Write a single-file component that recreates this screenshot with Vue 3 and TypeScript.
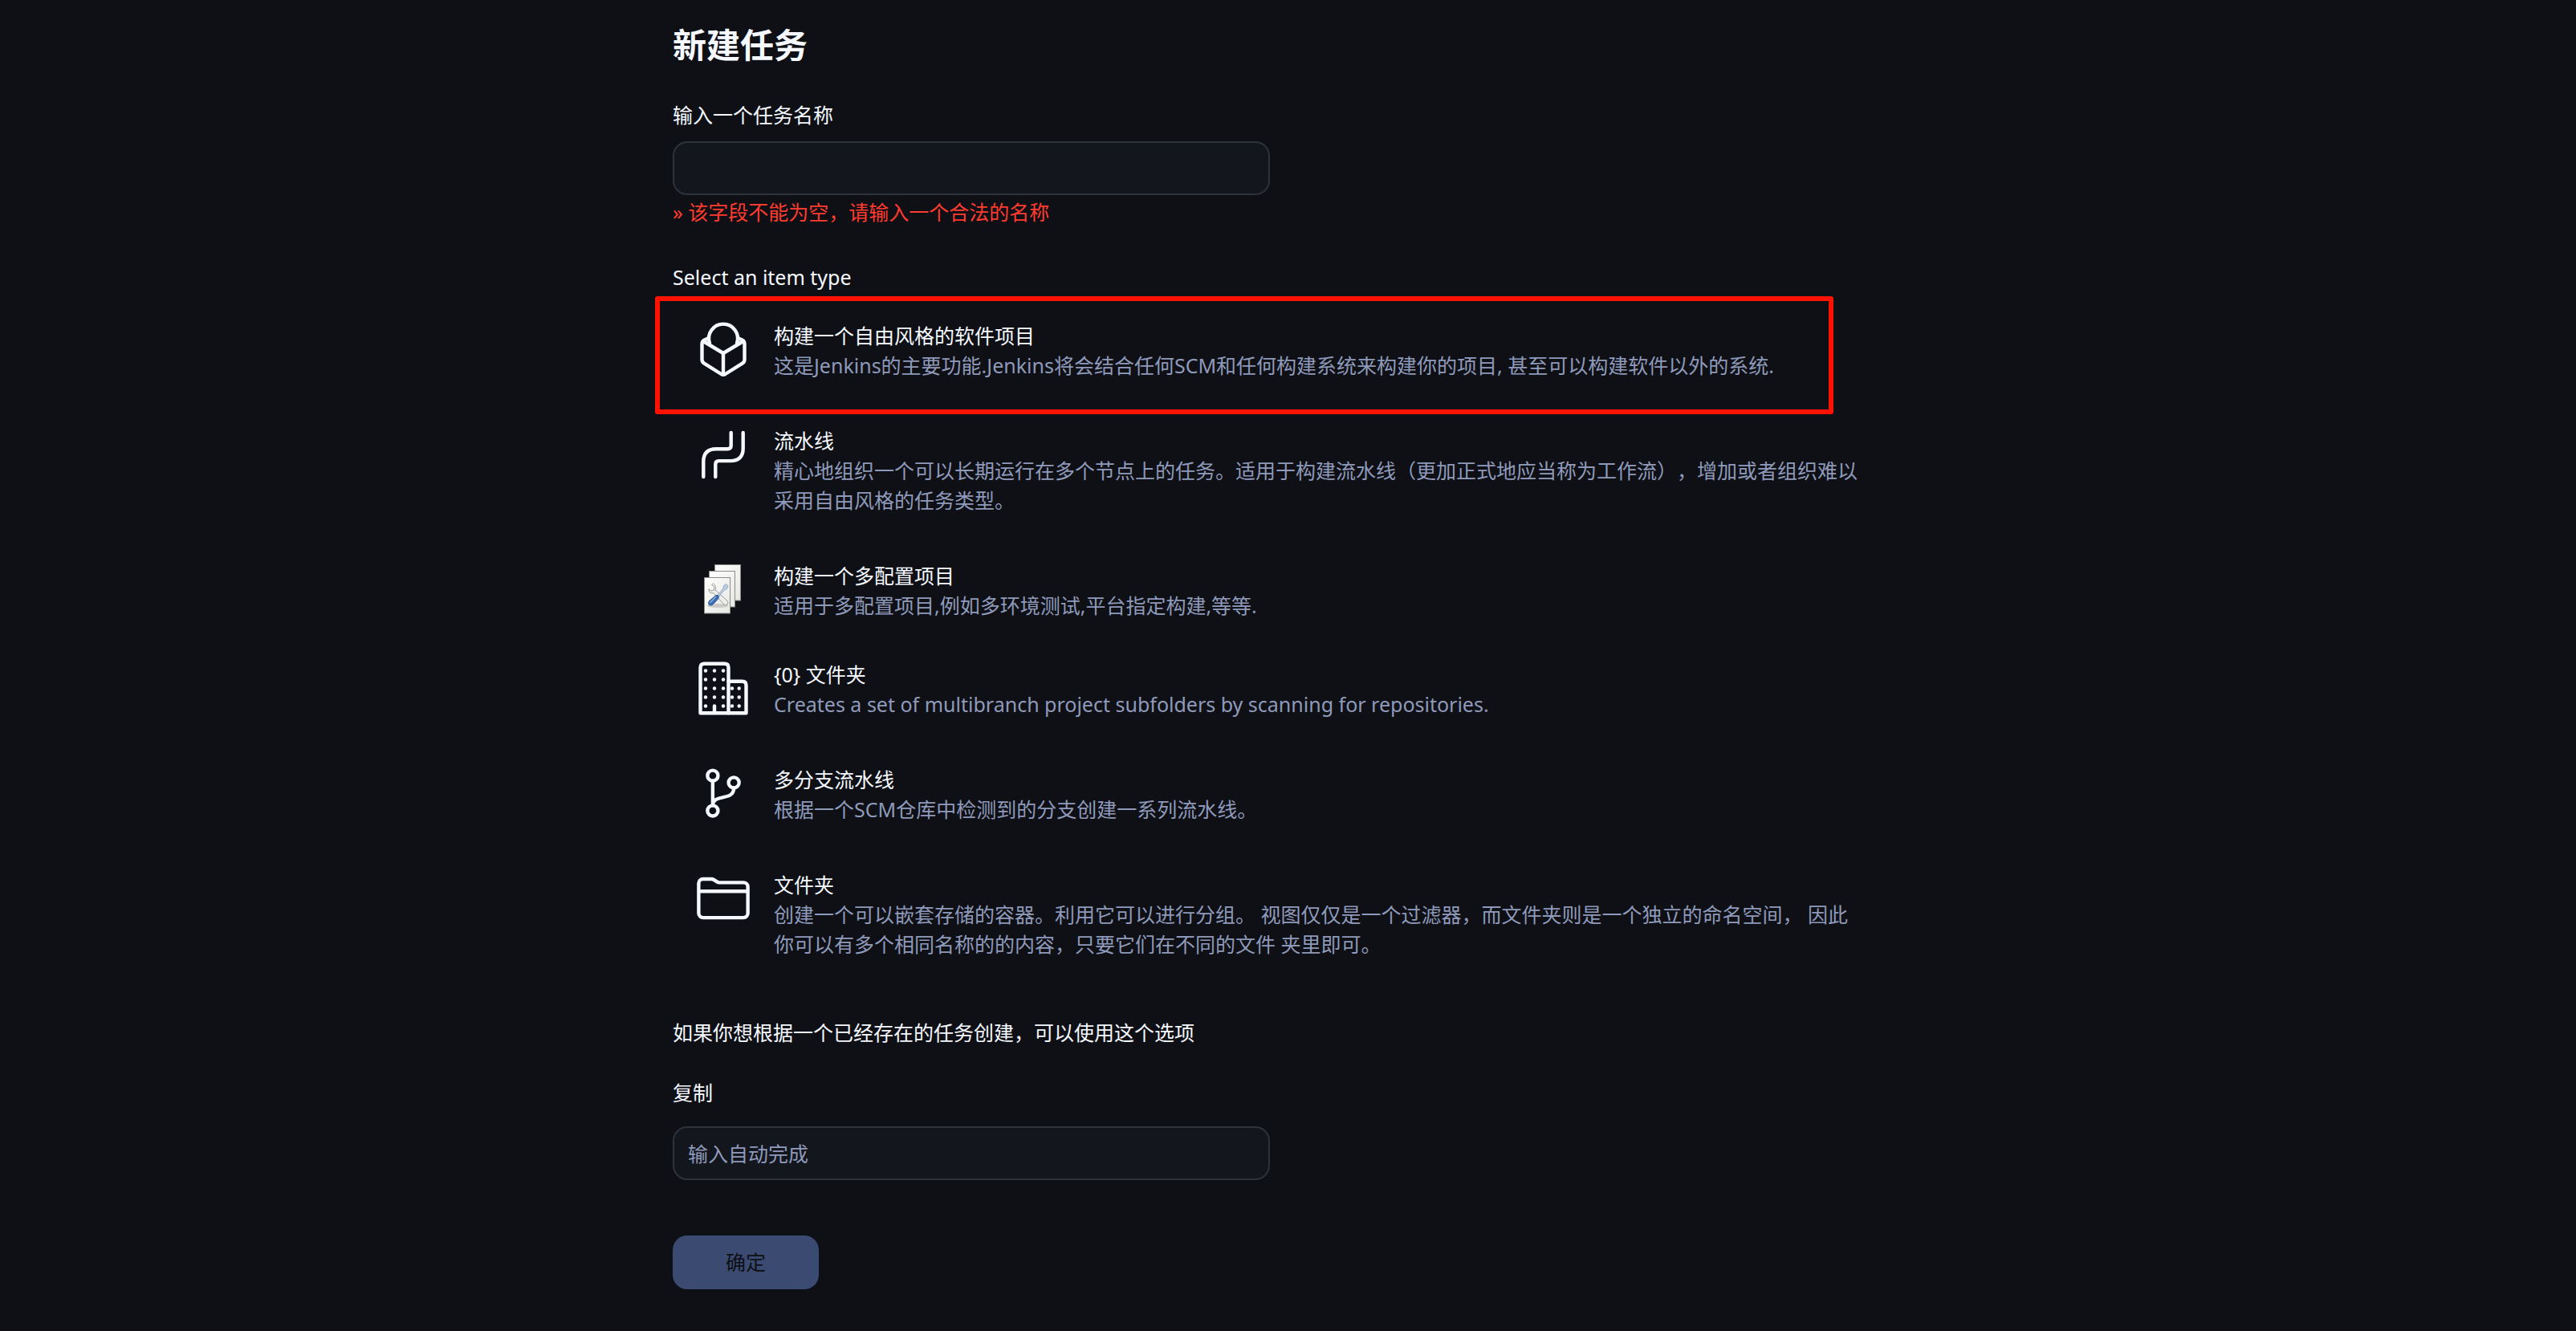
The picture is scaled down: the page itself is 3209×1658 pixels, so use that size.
<script setup lang="ts">
import { ref } from 'vue'

type IconName = 'freestyle' | 'pipeline' | 'matrix' | 'organization' | 'branch' | 'folder'

interface ItemType {
  id: IconName
  title: string
  description: string
}

const itemTypes: ItemType[] = [
  {
    id: 'freestyle',
    title: '构建一个自由风格的软件项目',
    description:
      '这是Jenkins的主要功能.Jenkins将会结合任何SCM和任何构建系统来构建你的项目, 甚至可以构建软件以外的系统.',
  },
  {
    id: 'pipeline',
    title: '流水线',
    description:
      '精心地组织一个可以长期运行在多个节点上的任务。适用于构建流水线（更加正式地应当称为工作流），增加或者组织难以采用自由风格的任务类型。',
  },
  {
    id: 'matrix',
    title: '构建一个多配置项目',
    description: '适用于多配置项目,例如多环境测试,平台指定构建,等等.',
  },
  {
    id: 'organization',
    title: '{0} 文件夹',
    description: 'Creates a set of multibranch project subfolders by scanning for repositories.',
  },
  {
    id: 'branch',
    title: '多分支流水线',
    description: '根据一个SCM仓库中检测到的分支创建一系列流水线。',
  },
  {
    id: 'folder',
    title: '文件夹',
    description:
      '创建一个可以嵌套存储的容器。利用它可以进行分组。 视图仅仅是一个过滤器，而文件夹则是一个独立的命名空间， 因此你可以有多个相同名称的的内容，只要它们在不同的文件 夹里即可。',
  },
]

const name = ref('')
const copyFrom = ref('')
const selected = ref<IconName | ''>('')
</script>

<template>
  <main class="page">
    <form class="form" @submit.prevent>
      <h1 class="heading">新建任务</h1>

      <label class="label" for="name">输入一个任务名称</label>
      <input id="name" v-model="name" class="field name-field" type="text" autocomplete="off" />
      <p class="error">» 该字段不能为空，请输入一个合法的名称</p>

      <fieldset class="types">
        <legend class="label">Select an item type</legend>
        <label
          v-for="item in itemTypes"
          :key="item.id"
          class="item"
          :class="{ marked: item.id === 'freestyle', compact: item.id === 'matrix' }"
        >
          <input v-model="selected" class="radio" type="radio" name="mode" :value="item.id" />

          <svg v-if="item.id === 'freestyle'" class="icon" viewBox="0 0 70 70" aria-hidden="true">
            <g class="line">
              <path d="M18 27.5A18 18 0 1 1 52 27.5" />
              <path d="M16 21.5L11.5 23.6Q8.500 25 8.500 28.500V48Q8.500 51 11.200 52.600L32.500 66Q35 67.400 37.500 66L58.800 52.600Q61.500 51 61.500 48V28.500Q61.500 25 58.500 23.600L54 21.500" />
              <path d="M10 25L35 40L60 25M35 40V66" />
            </g>
          </svg>

          <svg v-else-if="item.id === 'pipeline'" class="icon" viewBox="0 0 70 70" aria-hidden="true">
            <g class="line">
              <path d="M44.700 8V24Q44.700 28.200 40.500 28.200H26Q10.300 28.200 10.300 44V63" />
              <path d="M59.700 8V27.500Q59.700 43.100 44 43.100H29.500Q25.300 43.100 25.300 47.300V63" />
            </g>
          </svg>

          <svg v-else-if="item.id === 'matrix'" class="icon" viewBox="0 0 70 70" aria-hidden="true">
            <defs>
              <linearGradient id="paper" x1="0" y1="0" x2="1" y2="1">
                <stop offset="0" stop-color="#ffffff" />
                <stop offset="1" stop-color="#e6e6e3" />
              </linearGradient>
            </defs>
            <g fill="url(#paper)" stroke="#8b8c88">
              <rect x="24.500" y="4.500" width="32" height="44.500" />
              <rect x="17.500" y="12.500" width="32" height="44.500" />
              <rect x="11.500" y="20.500" width="32" height="44.500" />
            </g>
            <ellipse cx="28" cy="55.500" rx="13" ry="2.500" fill="#c9c9c5" />
            <path
              d="M22.500 28C25.500 29.500 26.500 33 25 36L40 49.500Q42 52 40 54Q37.500 55.500 35.500 53.500L22.500 39.500C19 41 16.500 38 17 34.500L20 37L23.500 36L23.800 32L20.600 29.500Z"
              fill="#eeeeec"
              stroke="#9a9c98"
            />
            <path d="M27.500 43L34.500 34.500L35.500 30.500L38.500 28.500L41 30.500L40 34L36 36.500L29.500 44.500Z" fill="#b9cbe0" stroke="#91a5be" stroke-width="0.8" />
            <path d="M26 42.500Q28.500 41.500 29.500 44.500Q29 47.500 22.500 53.500Q20.500 56 17.500 54.500Q15.500 52.500 17.500 49.500Z" fill="#3c6fb5" stroke="#204a87" stroke-width="0.8" />
            <path d="M18.800 51.500L25.500 44.500" stroke="#8fb4e3" stroke-width="1.300" stroke-linecap="round" />
          </svg>

          <svg v-else-if="item.id === 'organization'" class="icon" viewBox="0 0 70 70" aria-hidden="true">
            <g class="line">
              <path d="M6.500 66.300V9.500Q6.500 4.700 11.300 4.700H36.700Q41.500 4.700 41.500 9.500V66.300Z" />
              <path d="M41.500 26.700H58.700Q63.500 26.700 63.500 31.500V66.300H41.500" />
              <path d="M24 57.500V66" />
            </g>
            <g class="dot">
              <template v-for="row in 5" :key="row">
                <circle cx="13" :cy="2.5 + row * 11" r="2.200" />
                <circle v-if="row < 5" cx="24" :cy="2.5 + row * 11" r="2.200" />
                <circle cx="35" :cy="2.5 + row * 11" r="2.200" />
                <circle v-if="row > 2" cx="46" :cy="2.5 + row * 11" r="2.200" />
                <circle v-if="row > 2" cx="54.700" :cy="2.5 + row * 11" r="2.200" />
              </template>
            </g>
          </svg>

          <svg v-else-if="item.id === 'branch'" class="icon" viewBox="0 0 512 512" aria-hidden="true">
            <g class="line wide">
              <circle cx="160" cy="96" r="48" />
              <circle cx="160" cy="416" r="48" />
              <circle cx="352" cy="160" r="48" />
              <path d="M160 368V144M352 208c0 128-192 48-192 160" />
            </g>
          </svg>

          <svg v-else class="icon" viewBox="0 0 512 512" aria-hidden="true">
            <path
              class="line wide"
              d="M440 432H72a40 40 0 01-40-40V120a40 40 0 0140-40h75.890a40 40 0 0122.190 6.720l27.840 18.560a40 40 0 0022.190 6.720H440a40 40 0 0140 40v240a40 40 0 01-40 40zM32 192h448"
            />
          </svg>

          <span class="text">
            <span class="title">{{ item.title }}</span>
            <span class="description">{{ item.description }}</span>
          </span>
        </label>
      </fieldset>

      <p class="hint">如果你想根据一个已经存在的任务创建，可以使用这个选项</p>
      <label class="label" for="from">复制</label>
      <input id="from" v-model="copyFrom" class="field copy-field" type="text" placeholder="输入自动完成" autocomplete="off" />

      <button class="submit" type="submit" disabled>确定</button>
    </form>
  </main>
</template>

<style>
body {
  background: #0e1015;
}
</style>

<style scoped>
.page {
  box-sizing: border-box;
  min-height: 100vh;
  padding: 24px;
  color: #f5f9ff;
  font-family: "Noto Sans", "Noto Sans CJK SC", sans-serif;
  font-size: 25px;
  line-height: 37px;
  text-spacing-trim: space-all;
}

.form {
  display: flex;
  flex-direction: column;
  align-items: flex-start;
  max-width: 1533px;
  margin: 0 auto;
}

.heading {
  margin: 0 0 37px;
  font-size: 42px;
  font-weight: 700;
  line-height: 64px;
}

.label {
  display: block;
  padding: 0;
}

.field {
  box-sizing: border-box;
  width: 100%;
  max-width: 744px;
  height: 67px;
  padding: 0 17px;
  border: 2px solid #2d323b;
  border-radius: 18px;
  outline: none;
  background: #13161d;
  color: inherit;
  font: inherit;
}

.field::placeholder {
  color: #8f9abb;
  opacity: 1;
}

.name-field {
  margin-top: 14px;
}

.error {
  margin: 3px 0 44px;
  color: #ff3b2f;
}

.types {
  width: 100%;
  min-width: 0;
  max-width: 1480px;
  margin: 0;
  padding: 0;
  border: 0;
}

.types legend {
  margin-bottom: 36px;
}

.item {
  position: relative;
  display: flex;
  align-items: flex-start;
  gap: 28px;
  padding: 0 0 57px 28px;
}

.item.compact {
  padding-bottom: 49px;
}

.item:last-child {
  padding-bottom: 0;
}

.item.marked::after {
  content: "";
  position: absolute;
  inset: -31px 34px 15px -22px;
  border: 6px solid #ff1200;
  border-radius: 3px;
  pointer-events: none;
}

.radio {
  position: absolute;
  margin: 0;
  opacity: 0;
}

.icon {
  flex: none;
  width: 70px;
  height: 70px;
}

.line {
  fill: none;
  stroke: #f5f9ff;
  stroke-width: 4.4;
  stroke-linecap: round;
  stroke-linejoin: round;
}

.line.wide {
  stroke-width: 32;
}

.dot {
  fill: #f5f9ff;
}

.text {
  min-width: 0;
}

.title,
.description {
  display: block;
}

.description {
  color: #8f9abb;
}

.hint {
  margin: 73px 0 38px;
}

.copy-field {
  margin-top: 23px;
}

.submit {
  min-width: 182px;
  height: 67px;
  margin-top: 69px;
  padding: 0 24px;
  border: 0;
  border-radius: 18px;
  background: #3a4a70;
  color: #0e1015;
  font: inherit;
}
</style>
